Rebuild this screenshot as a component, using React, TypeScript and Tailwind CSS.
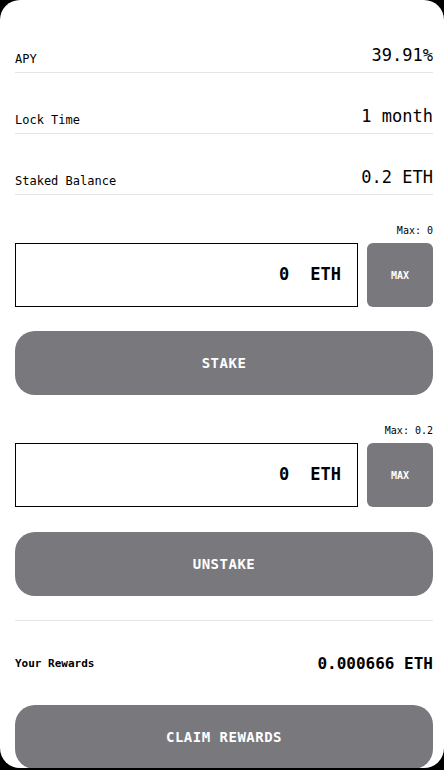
import React from "react";

const mono = { fontFamily: '"DejaVu Sans Mono", "Liberation Mono", monospace' };

function Row({ label, value }: { label: string; value: string }) {
  return (
    <div className="flex h-[61px] shrink-0 items-end justify-between border-b border-[#e5e5e5]">
      <span className="mb-[5px] text-[12px] leading-[16px] text-black">{label}</span>
      <span className="mb-[7px] text-[17px] leading-[20px] text-black">{value}</span>
    </div>
  );
}

function AmountInput({ max }: { max: string }) {
  return (
    <div className="flex flex-col">
      <div className="flex h-[14px] justify-end text-[10px] leading-[14px] text-black">Max: {max}</div>
      <div className="mt-[5px] flex h-[64px] gap-[9px]">
        <div className="flex flex-1 items-center border border-black pr-[16px]">
          <input
            readOnly
            defaultValue="0"
            className="min-w-0 flex-1 bg-transparent text-right text-[17px] font-bold text-black outline-none"
            style={mono}
          />
          <span className="ml-[21px] text-[17px] font-bold text-black">ETH</span>
        </div>
        <button className="flex w-[66px] items-center justify-center rounded-[6px] bg-[#78787d] text-[10px] font-bold text-white">
          MAX
        </button>
      </div>
    </div>
  );
}

function BigButton({ children }: { children: React.ReactNode }) {
  return (
    <button
      className="flex h-[64px] w-full shrink-0 items-center justify-center rounded-[20px] bg-[#78787d] text-[14px] font-bold tracking-[0.5px] text-white"
      style={mono}
    >
      {children}
    </button>
  );
}

export default function App() {
  return (
    <div className="h-[770px] w-[444px] bg-black" style={mono}>
      <div className="flex h-[768px] w-[444px] flex-col overflow-hidden rounded-[20px] bg-white pl-[15px] pr-[11px] pt-[12px]">
        <Row label="APY" value="39.91%" />
        <Row label="Lock Time" value="1 month" />
        <Row label="Staked Balance" value="0.2 ETH" />
        <div className="mt-[29px] shrink-0">
          <AmountInput max="0" />
        </div>
        <div className="mt-[24px] shrink-0">
          <BigButton>STAKE</BigButton>
        </div>
        <div className="mt-[29px] shrink-0">
          <AmountInput max="0.2" />
        </div>
        <div className="mt-[25px] shrink-0">
          <BigButton>UNSTAKE</BigButton>
        </div>
        <div className="mt-[24px] shrink-0 border-t border-[#e5e5e5]" />
        <div className="flex h-[84px] shrink-0 items-center justify-between">
          <span className="mt-[2px] text-[11px] font-bold text-black">Your Rewards</span>
          <span className="mt-[2px] text-[16px] font-bold text-black">0.000666 ETH</span>
        </div>
        <BigButton>CLAIM REWARDS</BigButton>
      </div>
    </div>
  );
}
